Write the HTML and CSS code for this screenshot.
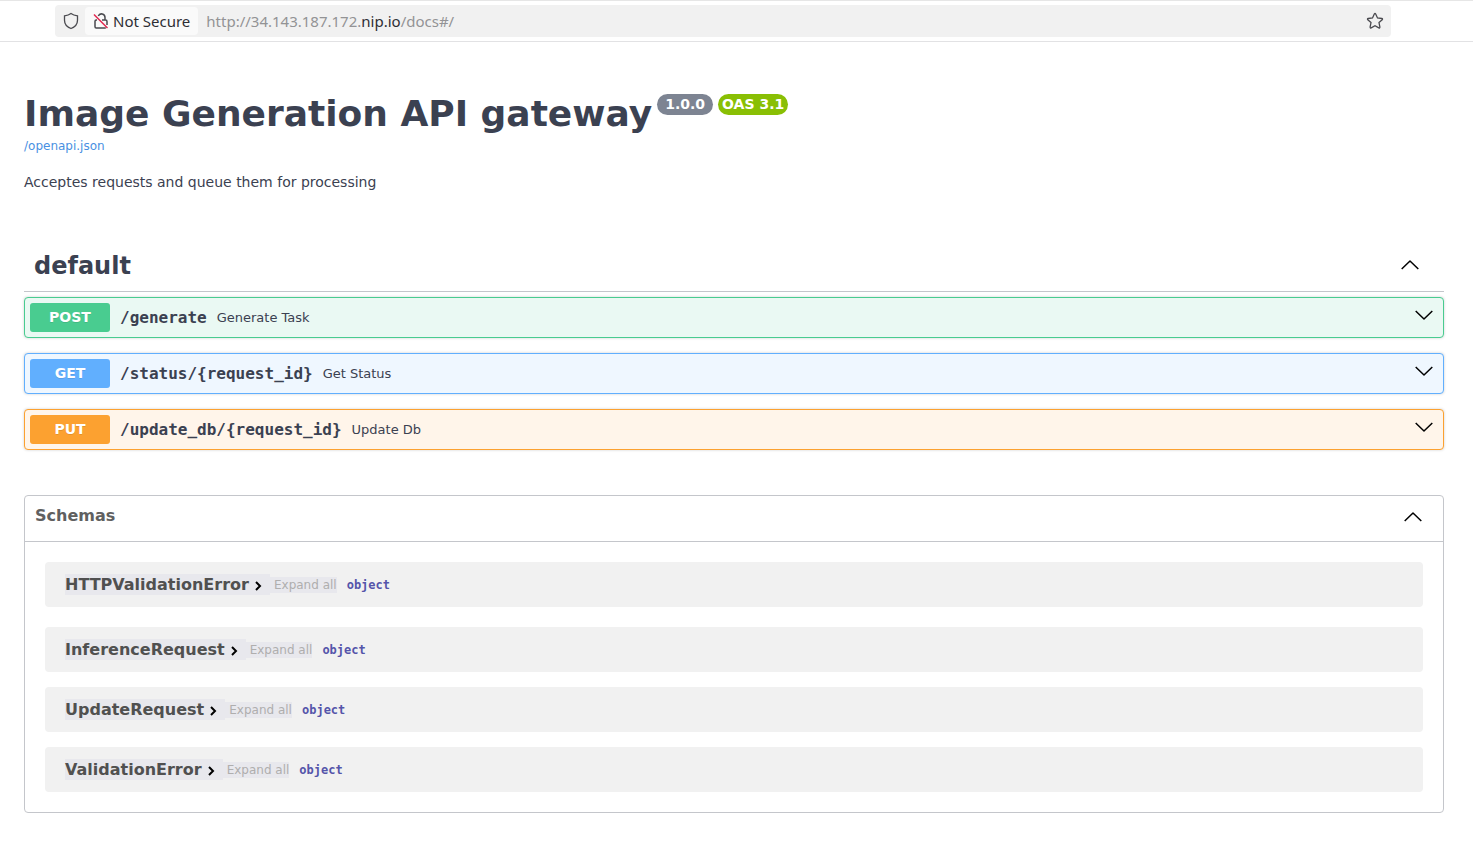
FILE: index.html
```html
<!DOCTYPE html>
<html lang="en">
<head>
<meta charset="utf-8">
<title>Image Generation API gateway</title>
<link rel="stylesheet" href="styles.css">
</head>
<body>
<svg class="defs" aria-hidden="true">
  <symbol id="up" viewBox="0 0 20 20"><path d="M1.700 13 10 5 18.300 13"/></symbol>
  <symbol id="down" viewBox="0 0 20 20"><path d="M1.700 5 10 13 18.300 5"/></symbol>
  <symbol id="right" viewBox="0 0 8 10"><path d="M2 1 6 5 2 9"/></symbol>
</svg>
<header class="toolbar">
  <div class="address">
    <button class="tool-button shield" aria-label="Tracking protection">
      <svg viewBox="0 0 16 18"><path d="M8 1.500c2 1.500 4 2 6.500 2.300v4.400c0 3.700-2.700 6.800-6.500 8.300-3.800-1.500-6.500-4.600-6.500-8.300V3.800C4 3.500 6 3 8 1.500z"/></svg>
    </button>
    <button class="security">
      <svg class="lock" viewBox="0 0 16 18"><path d="M5.300 4a3.500 3.500 0 0 1 6.700 1.500V8M4 8H3.200A1.200 1.200 0 0 0 2 9.200v5.600A1.200 1.200 0 0 0 3.200 16h9.600M9 8h3.600a1.400 1.400 0 0 1 1.400 1.400V13"/><path class="slash" d="M1 2.500 14.500 16"/></svg>
      <span>Not Secure</span>
    </button>
    <div class="url" role="textbox" aria-label="Address">http://34.143.187.172.<span class="host">nip.io</span>/docs#/</div>
    <button class="tool-button star" aria-label="Bookmark">
      <svg viewBox="0 0 18 18"><path d="M8.300 2Q9 .9 9.700 2l1.800 4 4.300.5q1.200.3.400 1.200L13 10.600l.9 4.500q0 1.200-1.100.8L9 13.700l-3.800 2.200q-1.100.4-1.100-.8l.9-4.500-3.200-2.900q-.8-.9.4-1.200L6.500 6z"/></svg>
    </button>
  </div>
</header>
<main class="page">
  <section class="info">
    <div class="title-row">
      <h1 class="title">Image Generation API gateway</h1>
      <span class="badge">1.0.0</span>
      <span class="badge oas">OAS 3.1</span>
    </div>
    <a class="spec-link" href="#openapi">/openapi.json</a>
    <p class="description">Acceptes requests and queue them for processing</p>
  </section>
  <section class="operations">
    <div class="tag">
      <h2 class="tag-name">default</h2>
      <button class="toggle" aria-label="Collapse default"><svg class="arrow"><use href="#up"/></svg></button>
    </div>
    <div class="operation post">
      <button class="summary"><span class="method">POST</span><span class="path">/generate</span><span class="note">Generate Task</span></button>
      <button class="toggle" aria-label="Expand generate"><svg class="arrow"><use href="#down"/></svg></button>
    </div>
    <div class="operation get">
      <button class="summary"><span class="method">GET</span><span class="path">/status/{request_id}</span><span class="note">Get Status</span></button>
      <button class="toggle" aria-label="Expand status"><svg class="arrow"><use href="#down"/></svg></button>
    </div>
    <div class="operation put">
      <button class="summary"><span class="method">PUT</span><span class="path">/update_db/{request_id}</span><span class="note">Update Db</span></button>
      <button class="toggle" aria-label="Expand update_db"><svg class="arrow"><use href="#down"/></svg></button>
    </div>
  </section>
  <section class="schemas">
    <div class="schemas-head">
      <h2 class="schemas-title">Schemas</h2>
      <button class="toggle" aria-label="Collapse schemas"><svg class="arrow"><use href="#up"/></svg></button>
    </div>
    <div class="schema-list">
      <div class="schema first"><button class="name">HTTPValidationError<svg class="caret"><use href="#right"/></svg></button><button class="expand">Expand all</button><strong class="type">object</strong></div>
      <div class="schema"><button class="name">InferenceRequest<svg class="caret"><use href="#right"/></svg></button><button class="expand">Expand all</button><strong class="type">object</strong></div>
      <div class="schema"><button class="name">UpdateRequest<svg class="caret"><use href="#right"/></svg></button><button class="expand">Expand all</button><strong class="type">object</strong></div>
      <div class="schema"><button class="name">ValidationError<svg class="caret"><use href="#right"/></svg></button><button class="expand">Expand all</button><strong class="type">object</strong></div>
    </div>
  </section>
</main>
</body>
</html>
```
FILE: styles.css
```css
* { box-sizing: border-box; }
body { margin: 0; background: #fff; color: #3b4151; font-family: "DejaVu Sans", sans-serif; }
button { margin: 0; padding: 0; border: 0; background: none; color: inherit; font: inherit; cursor: pointer; }
h1, h2, p { margin: 0; }
svg { display: block; fill: none; stroke: #000; }
.defs { width: 0; height: 0; position: absolute; }

.toolbar { padding: 4px 82px 4px 55px; border-top: 1px solid #e6e6e6; border-bottom: 1px solid #e2e2e4; }
.address { display: flex; align-items: center; height: 32px; padding: 2px 7px 2px 8px; border-radius: 4px; background: #f1f1f1; font-family: "Noto Sans", sans-serif; font-size: 15px; }
.tool-button svg { width: 16px; height: 18px; stroke: #4a4a4f; stroke-width: 1.300; }
.security { display: flex; align-items: center; gap: 4px; height: 28px; margin-left: 6px; padding: 0 8px; border-radius: 4px; background: #fafafa; color: #2e2e34; }
.lock { width: 16px; height: 18px; stroke: #4a4a4f; stroke-width: 1.500; }
.lock .slash { stroke: #e22850; }
.url { flex: 1; margin-left: 8px; color: #939395; }
.host { color: #2e2e34; }
.tool-button.star svg { width: 18px; height: 18px; }

.page { padding: 50px 29px 29px 24px; }
.title-row { display: flex; align-items: flex-start; }
.title { font-size: 36px; line-height: 44px; margin-right: 5px; }
.badge { margin: 2px 5px 0 0; padding: 2px 8px; border-radius: 20px; background: #7d8492; color: #fff; font-size: 14px; font-weight: 700; line-height: 17px; }
.badge.oas { padding: 2px 4px; background: #89bf04; }
.spec-link { display: block; width: max-content; margin-top: 2px; color: #4990e2; font-size: 12px; line-height: 16px; text-decoration: none; }
.description { margin-top: 20px; font-size: 14px; line-height: 16px; }

.operations { margin-top: 50px; }
.tag { display: flex; align-items: center; justify-content: space-between; height: 52px; margin-bottom: 5px; padding: 0 24px 0 10px; border-bottom: 1px solid #c4c6cb; }
.tag-name { font-size: 24px; line-height: 28px; }
.arrow { width: 20px; height: 20px; stroke-width: 1.500; stroke-linejoin: round; }
.operation { display: flex; align-items: flex-start; height: 41px; margin-bottom: 15px; padding: 5px 9px 5px 5px; border: 1px solid; border-radius: 4px; box-shadow: 0 0 3px rgba(0, 0, 0, .19); }
.summary { display: flex; flex: 1; align-items: center; text-align: left; }
.operation .toggle { margin-top: 3px; }
.method { width: 80px; border-radius: 3px; color: #fff; font-size: 14px; font-weight: 700; line-height: 29px; text-align: center; text-shadow: 0 1px 0 rgba(0, 0, 0, .1); }
.path { margin: 0 10px; font-family: "DejaVu Sans Mono", monospace; font-size: 16px; font-weight: 700; }
.note { font-size: 13px; }
.post { border-color: #49cc90; background: #eaf9f3; }
.post .method { background: #49cc90; }
.get { border-color: #61affe; background: #eff7ff; }
.get .method { background: #61affe; }
.put { border-color: #fca130; background: #fff5ea; }
.put .method { background: #fca130; }

.schemas { margin-top: 45px; border: 1px solid #c4c6cb; border-radius: 4px; color: #505050; }
.schemas-head { display: flex; align-items: center; justify-content: space-between; height: 46px; padding: 0 20px 6px 10px; border-bottom: 1px solid #c4c6cb; }
.schemas-head .toggle { margin-top: 4px; }
.schemas-title { color: #606060; font-size: 16px; line-height: 20px; }
.schema-list { padding: 20px; }
.schema { display: flex; align-items: center; height: 45px; padding: 0 20px 1px; border-radius: 4px; background: #f1f1f1; }
.schema + .schema { margin-top: 15px; }
.schema.first + .schema { margin-top: 20px; }
.name { display: flex; align-items: center; padding-right: 8px; background: #e8e8ed; font-size: 16px; font-weight: 700; line-height: 21px; }
.caret { width: 8px; height: 10px; margin: 3px 0 0 5px; stroke-width: 2; }
.expand { margin-top: 2px; padding-left: 4px; background: #e8e8ed; color: #afaeae; font-size: 12px; line-height: 16px; }
.type { margin: 2px 0 0 10px; color: #5555aa; font-family: "DejaVu Sans Mono", monospace; font-size: 12px; line-height: 16px; }
```
